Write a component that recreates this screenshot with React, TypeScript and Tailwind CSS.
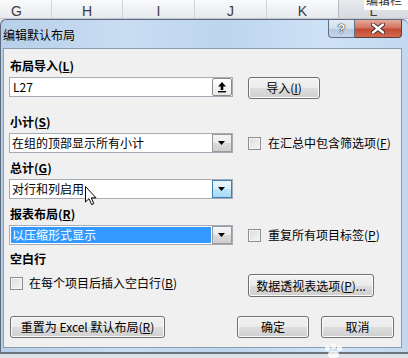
import React from "react";

const btn =
  "flex items-center justify-center border border-[#707070] rounded-[3px] bg-[linear-gradient(#f2f2f2_0%,#ebebeb_50%,#dddddd_51%,#cfcfcf_100%)] shadow-[inset_0_0_0_1px_#fbfbfb] text-[12px] leading-[16px] text-black";

function DropBtn({ hover }: { hover?: boolean }) {
  return (
    <div
      className={
        "w-[20px] h-[18px] mt-[0px] flex items-center justify-center border " +
        (hover
          ? "border-[#3c7fb1] bg-[linear-gradient(#eaf6fd_0%,#d9f0fc_50%,#bee6fd_51%,#a7d9f5_100%)]"
          : "border-[#9a9a9a] bg-[linear-gradient(#f4f4f4_0%,#ececec_50%,#dcdcdc_51%,#cfcfcf_100%)]")
      }
    >
      <svg width="8" height="5" viewBox="0 0 8 5">
        <path d="M0 0 H7 L3.5 4 Z" fill="#000" />
      </svg>
    </div>
  );
}

function Select({
  text,
  hover,
  selected,
}: {
  text: string;
  hover?: boolean;
  selected?: boolean;
}) {
  return (
    <div className="w-[224px] h-[20px] border border-[#a5acb5] bg-white flex items-stretch">
      <div className="flex-1 p-[1px] flex">
        <div
          className={
            "flex-1 flex items-center pl-[1px] text-[12px] leading-[16px] " +
            (selected ? "bg-[#3399ff] text-white" : "text-black")
          }
        >
          {text}
        </div>
      </div>
      <DropBtn hover={hover} />
    </div>
  );
}

function Check() {
  return (
    <div className="w-[13px] h-[13px] border border-[#8e8f8f] bg-[linear-gradient(135deg,#dcdcdc_0%,#f6f6f6_100%)] shadow-[inset_0_0_0_1px_#f4f4f4]" />
  );
}

function Label({ children }: { children: React.ReactNode }) {
  return (
    <div className="h-[16px] ml-[1px] text-[12px] leading-[16px] font-bold text-black">
      {children}
    </div>
  );
}

export default function App() {
  return (
    <div className="w-[408px] h-[358px] overflow-hidden relative bg-[#e6e8eb] font-['Noto_Sans_CJK_SC','Noto_Sans',sans-serif]">
      {/* Excel column header strip */}
      <div className="h-[19px] flex bg-[linear-gradient(#f9fafb,#e6e9ee)] border-b border-[#c5c9cf] text-[#3c3c3c] font-['Liberation_Sans',sans-serif] text-[14px]">
        <div className="w-[52px] border-r border-[#d2d5da] pl-[11px] leading-[22px]">G</div>
        <div className="w-[71px] border-r border-[#d2d5da] text-center leading-[22px]">H</div>
        <div className="w-[72px] border-r border-[#d2d5da] text-center leading-[22px]">I</div>
        <div className="w-[72px] border-r border-[#d2d5da] text-center leading-[22px]">J</div>
        <div className="w-[72px] border-r border-[#b8bcc2] text-center leading-[22px]">K</div>
        <div className="flex-1 bg-[linear-gradient(#e8eaed,#d6d9de)] text-center leading-[22px]">L</div>
      </div>
      <div className="absolute right-0 top-0 w-[44px] h-[10px] bg-white overflow-hidden">
        <div className="-mt-[8px] pl-[2px] text-[12px] leading-[16px] text-[#333] font-['Noto_Sans_CJK_SC',sans-serif]">
          编辑栏
        </div>
      </div>

      {/* Dialog */}
      <div className="w-[408px] rounded-t-[6px] border-t border-l border-[#5c6c7e] bg-[linear-gradient(90deg,#b7cfe9_0%,#c9ddf2_30%,#bdd5ee_55%,#cfe2f6_80%,#c2d8ef_100%)]">
        {/* Title bar */}
        <div className="h-[28px] flex items-start relative">
          <div className="pl-[2px] pt-[7px] text-[12px] leading-[16px] text-black">编辑默认布局</div>
          <div className="ml-auto mr-[6px] flex">
            <div className="w-[27px] h-[18px] border border-[#5d6f84] border-t-0 rounded-bl-[4px] bg-[linear-gradient(#e3ebf4_0%,#d3dfec_50%,#b5c7dc_51%,#c4d6ea_100%)] flex items-center justify-center">
              <span className="text-[13px] leading-[14px] font-bold text-white font-['Liberation_Sans',sans-serif] [text-shadow:0_0_1px_#222,0_0_1px_#222,0_0_1px_#222]">
                ?
              </span>
            </div>
            <div className="w-[47px] h-[18px] border border-[#5d3a34] border-t-0 border-l-0 rounded-br-[4px] bg-[linear-gradient(#e8a899_0%,#d27562_45%,#c44a32_55%,#d26a50_100%)] flex items-center justify-center">
              <svg width="14" height="11" viewBox="0 0 14 11">
                <path d="M2 1.5 L12 9.5 M12 1.5 L2 9.5" stroke="#3a2a28" strokeWidth="4.2" strokeLinecap="round" />
                <path d="M2 1.5 L12 9.5 M12 1.5 L2 9.5" stroke="#ffffff" strokeWidth="2.4" strokeLinecap="round" />
              </svg>
            </div>
          </div>
        </div>

        {/* Client area */}
        <div className="ml-[2px] mr-[6px] border border-[#8d9bab] bg-[#f0f0f0] pl-[5px] pt-[9px] pb-[9px] flex flex-col">
          <Label>
            布局导入(<u>L</u>)
          </Label>
          <div className="mt-[3px] h-[22px] flex items-start">
            <div className="w-[224px] h-[20px] border border-[#a5acb5] bg-white flex items-center">
              <div className="flex-1 pl-[3px] text-[12px] leading-[16px] text-black">L27</div>
              <div className="w-[20px] h-[18px] border border-[#8a8a8a] rounded-[2px] bg-[linear-gradient(#ffffff,#e9e9e9)] flex items-center justify-center">
                <svg width="10" height="12" viewBox="0 0 10 12">
                  <path d="M5 1 L9 5.5 H6.3 V9 H3.7 V5.5 H1 Z" fill="#000" />
                  <rect x="1" y="10" width="8" height="1.4" fill="#000" />
                </svg>
              </div>
            </div>
            <div className={btn + " ml-[15px] w-[72px] h-[22px]"}>
              导入(<u>I</u>)
            </div>
          </div>

          <div className="mt-[15px]">
            <Label>
              小计(<u>S</u>)
            </Label>
          </div>
          <div className="mt-[3px] h-[20px] flex items-center">
            <Select text="在组的顶部显示所有小计" />
            <div className="ml-[15px]">
              <Check />
            </div>
            <div className="ml-[7px] text-[12px] leading-[16px] text-black">
              在汇总中包含筛选项(<u>F</u>)
            </div>
          </div>

          <div className="mt-[7px]">
            <Label>
              总计(<u>G</u>)
            </Label>
          </div>
          <div className="mt-[3px] h-[20px] flex items-center">
            <Select text="对行和列启用" hover />
          </div>

          <div className="mt-[7px]">
            <Label>
              报表布局(<u>R</u>)
            </Label>
          </div>
          <div className="mt-[3px] h-[20px] flex items-center">
            <Select text="以压缩形式显示" selected />
            <div className="ml-[15px]">
              <Check />
            </div>
            <div className="ml-[7px] text-[12px] leading-[16px] text-black">
              重复所有项目标签(<u>P</u>)
            </div>
          </div>

          <div className="mt-[6px]">
            <Label>空白行</Label>
          </div>
          <div className="mt-[7px] h-[23px] flex items-start">
            <div className="mt-[3px] ml-[1px]">
              <Check />
            </div>
            <div className="ml-[6px] mt-[1px] text-[12px] leading-[16px] text-black w-[204px]">
              在每个项目后插入空白行(<u>B</u>)
            </div>
            <div className={btn + " ml-[15px] w-[126px] h-[23px]"}>
              数据透视表选项(<u>P</u>)...
            </div>
          </div>

          <div className="mt-[19px] h-[22px] flex">
            <div className={btn + " ml-[1px] w-[155px] h-[22px]"}>
              重置为 Excel 默认布局(<u>R</u>)
            </div>
            <div className={btn + " ml-[72px] w-[72px] h-[22px] border-[#3c7fb1] shadow-[inset_0_0_0_1px_#7fd5f5]"}>
              确定
            </div>
            <div className={btn + " ml-[12px] w-[73px] h-[22px]"}>取消</div>
          </div>
        </div>
        <div className="h-[4px]" />
      </div>
      <div className="h-[2px] bg-[#6b737d]" />
      <div className="h-[4px] bg-[#dfe2e6]" />

      {/* Mouse cursor */}
      <svg
        className="absolute left-[85px] top-[186px]"
        width="13"
        height="20"
        viewBox="0 0 13 20"
      >
        <path
          d="M0.5 0.5 V16 L4 12.6 L6.6 18.6 L8.8 17.6 L6.3 11.8 H11 Z"
          fill="#fff"
          stroke="#000"
          strokeWidth="1"
          strokeLinejoin="round"
        />
      </svg>

      {/* watermark dots */}
      <div className="absolute left-[325px] top-[345px] w-[5px] h-[6px] rounded-full bg-white/80" />
      <div className="absolute left-[331px] top-[343px] w-[5px] h-[6px] rounded-full bg-white/80" />
      <div className="absolute left-[337px] top-[345px] w-[5px] h-[6px] rounded-full bg-white/80" />
      <div className="absolute left-[328px] top-[351px] w-[11px] h-[7px] rounded-full bg-white/80" />
    </div>
  );
}
